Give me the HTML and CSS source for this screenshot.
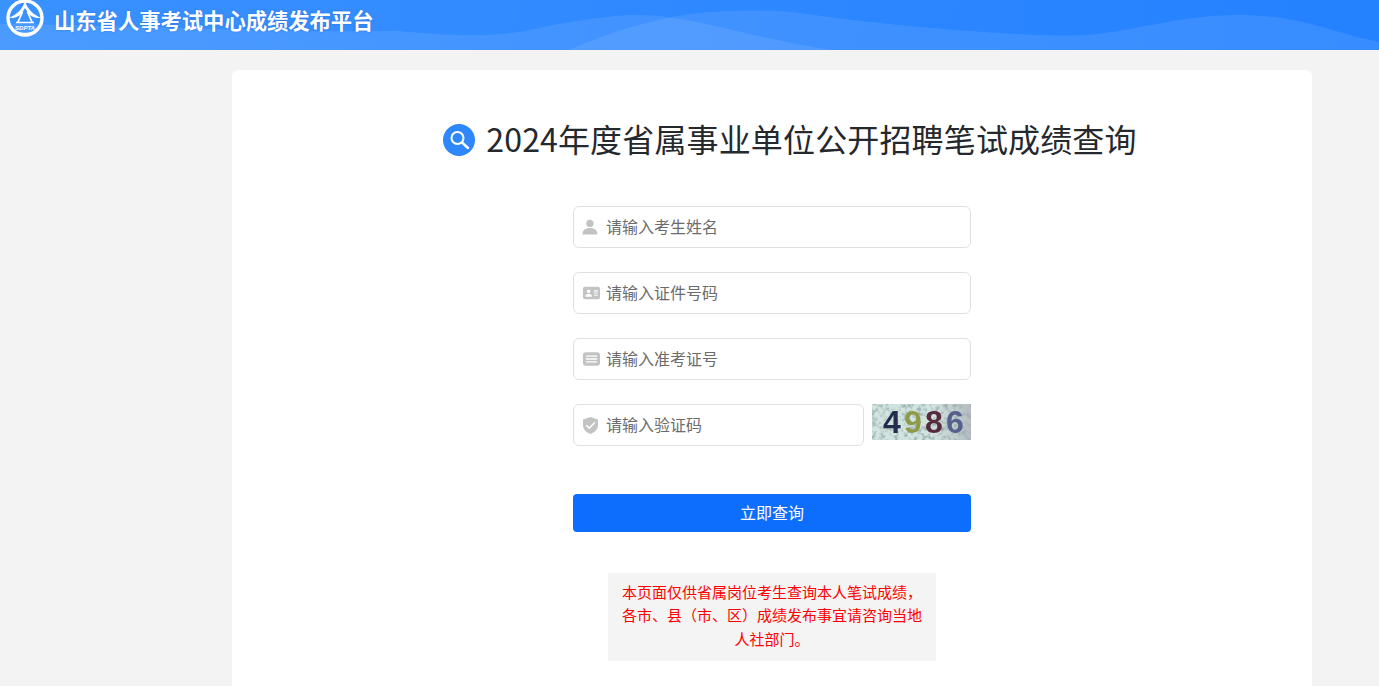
FILE: index.html
```html
<!DOCTYPE html>
<html lang="zh-CN">
<head>
<meta charset="utf-8">
<title>山东省人事考试中心成绩发布平台</title>
<link rel="stylesheet" href="styles.css">
</head>
<body>
<header class="topbar">
  <svg class="waves" viewBox="0 0 1379 50" preserveAspectRatio="none" aria-hidden="true">
    <path class="wave" d="M0 50V24C130 25 280 33 400 31C450 36 490 37 525 31C570 21 610 15 640 15C690 15 750 38 831 50Z"/>
    <path class="wave" d="M569 50C610 32 650 20 690 14C720 10 770 9 800 13C880 25 1030 38 1087 35C1130 32 1180 15 1237 15C1300 15 1320 29 1379 42V50Z"/>
  </svg>
  <svg class="logo" viewBox="0 0 40 40" aria-hidden="true">
    <circle cx="20" cy="18" r="17" fill="none" stroke="#fff" stroke-width="3.4"/>
    <path d="M6 29C10 34 30 34 34 29A18.6 18.6 0 0 1 6 29Z" fill="#fff"/>
    <path d="M20 0C19 7 13 14 4 18C12 18.500 16 15 17.500 12L20 8L22.500 12C24 15 28 18.500 36 18C27 14 21 7 20 0Z" fill="#fff"/>
    <path d="M17.500 12L13 22M22.500 12L27 22M11 22.500H29" fill="none" stroke="#fff" stroke-width="1.700"/>
    <text x="20" y="29.500" class="logo-text">SDPTA</text>
  </svg>
  <h1 class="site-name">山东省人事考试中心成绩发布平台</h1>
</header>

<main class="card">
  <div class="heading">
    <span class="heading-icon">
      <svg viewBox="0 0 32 32" width="32" height="32" aria-hidden="true">
        <circle cx="14.5" cy="14" r="6" fill="none" stroke="#fff" stroke-width="2"/>
        <path d="M19 18.5L25 24" stroke="#fff" stroke-width="2.4" stroke-linecap="round"/>
      </svg>
    </span>
    <h2 class="heading-text">2024年度省属事业单位公开招聘笔试成绩查询</h2>
  </div>

  <form class="form">
    <label class="field">
      <svg class="field-icon" viewBox="0.5 -.5 17 17" aria-hidden="true"><circle cx="8" cy="4.6" r="3.4"/><path d="M1 15C1 11 3.5 9 8 9S15 11 15 15Z"/></svg>
      <input type="text" placeholder="请输入考生姓名">
    </label>
    <label class="field">
      <svg class="field-icon" viewBox="-1 -1.500 19 19" aria-hidden="true"><path fill-rule="evenodd" d="M2 1.500H16A2 2 0 0 1 18 3.500V12.500A2 2 0 0 1 16 14.500H2A2 2 0 0 1 0 12.500V3.500A2 2 0 0 1 2 1.500ZM6 4.200A1.900 1.900 0 1 0 6 8A1.900 1.900 0 1 0 6 4.200ZM2.400 12H9.600C9.600 10 8 8.900 6 8.900S2.400 10 2.400 12ZM11.500 5.200V6.300H15.700V5.200ZM11.500 7.500V8.600H15.700V7.500ZM11.500 9.800V10.900H15.700V9.800Z"/></svg>
      <input type="text" placeholder="请输入证件号码">
    </label>
    <label class="field">
      <svg class="field-icon" viewBox="-1 -1.500 19 19" aria-hidden="true"><path fill-rule="evenodd" d="M3 1H15A3 3 0 0 1 18 4V12A3 3 0 0 1 15 15H3A3 3 0 0 1 0 12V4A3 3 0 0 1 3 1ZM3 4.200V5.600H15V4.200ZM3 7.300V8.700H15V7.300ZM3 10.400V11.800H15V10.400Z"/></svg>
      <input type="text" placeholder="请输入准考证号">
    </label>
    <div class="captcha-row">
      <label class="field field-short">
        <svg class="field-icon" viewBox="-.5 -1 18 18" aria-hidden="true"><path fill-rule="evenodd" d="M8 0L15.500 2.500V8C15.500 12.200 12.500 15.400 8 17C3.500 15.400 .5 12.200 .5 8V2.500ZM4.200 7.800L3.200 8.800L6.800 12.200L12.800 6.100L11.800 5.100L6.800 10.100Z"/></svg>
        <input type="text" placeholder="请输入验证码">
      </label>
      <div class="captcha">
        <svg class="captcha-noise" width="99" height="36" aria-hidden="true">
          <defs>
            <filter id="noise" color-interpolation-filters="sRGB"><feTurbulence type="fractalNoise" baseFrequency="0.22" numOctaves="2" seed="7"/><feColorMatrix type="matrix" values="0 0 0 0 .62  0 0 0 0 .7  0 0 0 0 .7  3.2 0 0 0 -1.450"/></filter>
            <linearGradient id="shade"><stop offset=".6" stop-color="#a9acb4" stop-opacity="0"/><stop offset="1" stop-color="#a9acb4" stop-opacity=".7"/></linearGradient>
          </defs>
          <rect width="99" height="36" fill="#d2e4e0"/>
          <rect width="99" height="36" filter="url(#noise)"/>
          <rect width="99" height="36" fill="url(#shade)"/>
        </svg>
        <span class="digits"><span class="d1">4</span><span class="d2">9</span><span class="d3">8</span><span class="d4">6</span></span>
      </div>
    </div>
    <button class="submit" type="button">立即查询</button>
  </form>

  <p class="notice">本页面仅供省属岗位考生查询本人笔试成绩，各市、县（市、区）成绩发布事宜请咨询当地人社部门。</p>
</main>
</body>
</html>
```
FILE: styles.css
```css
* { box-sizing: border-box; }
html, body { margin: 0; height: 100%; overflow: hidden; }
body {
  background: #f3f3f3;
  font-family: "Noto Sans CJK SC", "Noto Sans", sans-serif;
  color: #212529;
}
.topbar {
  position: relative;
  height: 50px;
  display: flex;
  align-items: flex-start;
  padding-left: 5px;
  overflow: hidden;
  background: linear-gradient(100deg, #3a92ff 0%, #3089ff 45%, #2481ff 100%);
}
.waves { position: absolute; inset: 0; width: 100%; height: 100%; }
.wave { fill: #fff; fill-opacity: .09; }
.logo { position: relative; width: 40px; height: 40px; flex: none; overflow: visible; }
.logo-text {
  font: italic bold 6px "Liberation Sans", sans-serif;
  fill: #fff;
  text-anchor: middle;
}
.site-name {
  position: relative;
  margin: 4px 0 0 9px;
  font-size: 21.3px;
  line-height: 32px;
  font-weight: 700;
  color: #fff;
  text-shadow: 0 0 2px rgba(20, 70, 170, .4);
  white-space: nowrap;
}
.card {
  width: 1080px;
  min-height: calc(100vh - 70px);
  margin: 20px 0 0 232px;
  padding-top: 50px;
  background: #fff;
  border-radius: 6px 6px 0 0;
  display: flex;
  flex-direction: column;
  align-items: center;
}
.heading {
  display: flex;
  align-items: center;
  gap: 11px;
  height: 40px;
  padding-left: 36px;
}
.heading-icon {
  width: 32px;
  height: 32px;
  flex: none;
  border-radius: 50%;
  background: #2f88fb;
}
.heading-icon svg { display: block; }
.heading-text {
  margin: 0 0 4px;
  font-size: 32px;
  line-height: 40px;
  font-weight: 400;
  letter-spacing: .15px;
  color: #25282c;
  white-space: nowrap;
}
.form {
  width: 398px;
  margin-top: 46px;
  display: flex;
  flex-direction: column;
  gap: 24px;
}
.field {
  height: 42px;
  display: flex;
  align-items: center;
  gap: 6px;
  padding: 0 8px;
  background: #fff;
  border: 1px solid #dfe0e4;
  border-radius: 6px;
}
.field-icon { width: 18px; height: 18px; flex: none; fill: #c3c3c3; }
.field input {
  flex: 1;
  min-width: 0;
  height: 100%;
  padding: 0 0 2px;
  border: 0;
  outline: 0;
  background: transparent;
  font: 16px "Noto Sans CJK SC", sans-serif;
  color: #333;
}
.field input::placeholder { color: #6c6c6c; opacity: 1; }
.captcha-row { display: flex; align-items: flex-start; gap: 8px; }
.field-short { width: 291px; flex: none; }
.captcha {
  position: relative;
  width: 99px;
  height: 36px;
  overflow: hidden;
}
.captcha-noise { display: block; filter: blur(.5px); }
.digits {
  position: absolute;
  left: 11px;
  top: 0;
  font: 700 32px/36px "Liberation Sans", sans-serif;
  letter-spacing: 3.2px;
  filter: blur(.6px);
}
.d1 { color: #232c4c; }
.d2 { color: #8f9a48; }
.d3 { color: #572a3c; }
.d4 { color: #56608c; }
.submit {
  height: 38px;
  margin-top: 24px;
  padding: 0 0 2px;
  border: 0;
  border-radius: 4px;
  background: #0d6efd;
  color: #fff;
  font: 16px "Noto Sans CJK SC", sans-serif;
}
.notice {
  width: 328px;
  margin: 41px 0 0;
  padding: 7px 14px 11px;
  background: #f4f4f4;
  color: #f00;
  font-size: 15px;
  line-height: 23.4px;
  text-align: center;
}
```
